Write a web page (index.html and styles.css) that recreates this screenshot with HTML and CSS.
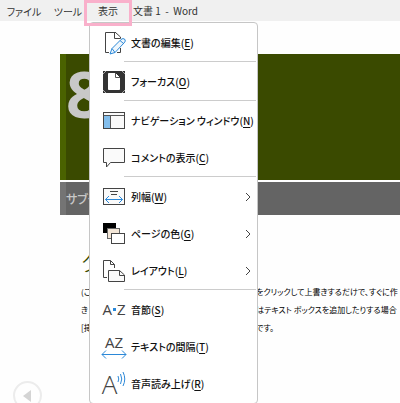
FILE: index.html
```html
<!DOCTYPE html>
<html lang="ja">

<head>
    <meta charset="UTF-8">
    <meta name="viewport" content="width=device-width, initial-scale=1.0">
    <title>文書 1 - Word</title>
    <link rel="stylesheet" href="styles.css">
</head>

<body>

    <header class="menu-bar">
        <button type="button" class="tab">ファイル</button>
        <button type="button" class="tab">ツール</button>
        <div class="view-tab">
            <button type="button" class="tab tab-active" aria-haspopup="true" aria-expanded="true">表示</button>

            <div class="menu" role="menu">
                <button type="button" class="item" role="menuitem">
                    <svg width="26" height="26" viewBox="0 0 26 26" fill="none">
                        <path d="M15 2.500H4.500V22.500H8M19.500 18V22.500H16M13.500 2.500V8.500H19.500V7L14.500 2.500Z" stroke="#444"/>
                        <path d="M9 24L11 18.500L20 9.500Q22 7.500 24 9.500Q25 11 23 13L14 22.500Z" fill="#eef6fc" stroke="#2b88d8"/>
                        <path d="M11 18.500L14 22.500M19 10.500L22.500 13.500" stroke="#2b88d8"/>
                    </svg>
                    <span>文書の編集(<u>E</u>)</span>
                </button>
                <hr>
                <button type="button" class="item" role="menuitem">
                    <svg width="26" height="26" viewBox="0 0 26 26" fill="none">
                        <rect x="2" y="2" width="22" height="22" fill="#333"/>
                        <path d="M7.500 4.500H14.500L18.500 8.500V20.500H7.500Z" fill="#fff" stroke="#fff"/>
                        <path d="M14.500 4V8.500H19" stroke="#555"/>
                        <path d="M2 5L5 2M21 2L24 5M2 21L5 24M21 24L24 21" stroke="#aaa"/>
                    </svg>
                    <span>フォーカス(<u>O</u>)</span>
                </button>
                <hr>
                <button type="button" class="item" role="menuitem">
                    <svg width="26" height="26" viewBox="0 0 26 26" fill="none">
                        <rect x="2.500" y="4.500" width="21" height="16" fill="#fafafa" stroke="#444"/>
                        <rect x="3" y="8" width="6" height="12" fill="#83beec"/>
                        <path d="M3 7.500H23M9.500 8V20" stroke="#555"/>
                    </svg>
                    <span>ナビゲーション ウィンドウ(<u>N</u>)</span>
                </button>
                <button type="button" class="item" role="menuitem">
                    <svg width="26" height="26" viewBox="0 0 26 26" fill="none">
                        <path d="M2.500 3.500H23.500V17.500H9.500L5.500 22V17.500H2.500Z" fill="#fafafa" stroke="#444"/>
                    </svg>
                    <span>コメントの表示(<u>C</u>)</span>
                </button>
                <hr>
                <button type="button" class="item" role="menuitem" aria-haspopup="true">
                    <svg width="26" height="26" viewBox="0 0 26 26" fill="none">
                        <rect x="2.500" y="4.500" width="21" height="16" fill="#fafafa" stroke="#444"/>
                        <path d="M9 7.500H17M10 10.500H16" stroke="#444"/>
                        <path d="M4.500 15.500H21.500M8 12L4.500 15.500L8 19M18 12L21.500 15.500L18 19" stroke="#2b88d8"/>
                    </svg>
                    <span>列幅(<u>W</u>)</span>
                    <svg class="arrow" width="6" height="10" viewBox="0 0 6 10" fill="none"><path d="M1 1L5 5L1 9" stroke="#444"/></svg>
                </button>
                <button type="button" class="item" role="menuitem" aria-haspopup="true">
                    <svg width="26" height="26" viewBox="0 0 26 26" fill="none">
                        <rect x="2" y="2" width="13" height="10" fill="#000"/>
                        <rect x="6.500" y="7.500" width="12" height="10" fill="#f3e6d7" stroke="#666"/>
                        <rect x="10.500" y="12.500" width="13" height="10" fill="#fff" stroke="#444"/>
                    </svg>
                    <span>ページの色(<u>G</u>)</span>
                    <svg class="arrow" width="6" height="10" viewBox="0 0 6 10" fill="none"><path d="M1 1L5 5L1 9" stroke="#444"/></svg>
                </button>
                <button type="button" class="item" role="menuitem" aria-haspopup="true">
                    <svg width="26" height="26" viewBox="0 0 26 26" fill="none">
                        <path d="M6 19.500H2.500V2.500H9.500L13.500 6.500V10M9.500 2.500V6.500H13.500" stroke="#444"/>
                        <path d="M7.500 12.500H18.500L23.500 17V23.500H7.500Z" fill="#fafafa" stroke="#444"/>
                        <path d="M18.500 12.500V17.500H23.500" stroke="#444"/>
                    </svg>
                    <span>レイアウト(<u>L</u>)</span>
                    <svg class="arrow" width="6" height="10" viewBox="0 0 6 10" fill="none"><path d="M1 1L5 5L1 9" stroke="#444"/></svg>
                </button>
                <hr>
                <button type="button" class="item" role="menuitem">
                    <span class="az-icon az-dot">A<i></i>Z</span>
                    <span>音節(<u>S</u>)</span>
                </button>
                <button type="button" class="item" role="menuitem">
                    <span class="az-icon az-wide">
                        <span>AZ</span>
                        <svg width="26" height="9" viewBox="0 0 26 9" fill="none"><path d="M1 4.500H25M5 0.500L1 4.500L5 8.500M21 0.500L25 4.500L21 8.500" stroke="#2b88d8"/></svg>
                    </span>
                    <span>テキストの間隔(<u>T</u>)</span>
                </button>
                <button type="button" class="item" role="menuitem">
                    <span class="az-icon az-read">
                        <span>A</span>
                        <svg width="9" height="16" viewBox="0 0 9 16" fill="none"><path d="M1 5Q2.500 8 1 11M3.500 3Q6 8 3.500 13M6 1Q9.500 8 6 15" stroke="#2b88d8"/></svg>
                    </span>
                    <span>音声読み上げ(<u>R</u>)</span>
                </button>
            </div>
        </div>
        <span class="doc-name">文書 1&nbsp; -&nbsp; Word</span>
    </header>

    <main class="page">
        <div class="cover">8</div>
        <div class="subtitle">サブタ</div>
        <h1>タ</h1>
        <div class="text">
            <span>(こ</span>
            <span>をクリックして上書きするだけで、すぐに作</span>
            <span>き</span>
            <span>はテキスト ボックスを追加したりする場合</span>
            <span>[挿</span>
            <span>です。</span>
        </div>
    </main>

    <button type="button" class="prev" aria-label="前のページ">
        <svg width="8" height="12" viewBox="0 0 8 12"><path d="M8 0V12L0 6Z" fill="#d4d4d4"/></svg>
    </button>

</body>

</html>
```

FILE: styles.css
```css
body {
    margin: 0;
    height: 100vh;
    overflow: hidden;
    background-color: #fefefe;
    color: #222;
    font-family: "Noto Sans CJK JP", sans-serif;
    font-size: 10px;
    font-kerning: normal;
    font-feature-settings: "palt", "kern";
}

button {
    margin: 0;
    padding: 0;
    border: none;
    background: none;
    color: inherit;
    font: inherit;
    font-kerning: inherit;
    font-feature-settings: inherit;
}

/* menu bar */
.menu-bar {
    display: flex;
    height: 21px;
    padding-left: 2px;
    background-color: #f0f0f0;
    color: #333;
    line-height: 21px;
    white-space: nowrap;
}

.tab {
    width: 44px;
    height: 22px;
    text-align: center;
}

.view-tab {
    position: relative;
    margin-left: -6px;
}

.tab-active {
    position: relative;
    z-index: 2;
    box-sizing: border-box;
    width: 48px;
    height: 26px;
    padding-bottom: 4px;
    border: 3px solid #f9b0cb;
    line-height: 16px;
}

.doc-name {
    padding-left: 1px;
}

/* drop-down menu */
.menu {
    position: absolute;
    top: 22px;
    left: 5px;
    z-index: 1;
    box-sizing: border-box;
    width: 169px;
    padding: 1px 0;
    border: 1px solid #c6c6c6;
    border-radius: 4px;
    background-color: #fff;
    color: #111;
}

.item {
    display: flex;
    align-items: center;
    gap: 4px;
    width: 100%;
    height: 37px;
    padding: 0 6px 0 11px;
    font-weight: 500;
    text-align: left;
    white-space: nowrap;
}

.item:hover {
    background-color: #eee;
}

.item svg {
    flex-shrink: 0;
}

.item u {
    text-underline-offset: 2px;
}

.item .arrow {
    margin-left: auto;
}

.menu hr {
    height: 1px;
    margin: 0 1px 1px 34px;
    border: none;
    background-color: #ccc;
}

.az-icon {
    display: flex;
    align-items: center;
    justify-content: center;
    width: 26px;
    color: #444;
    font-family: "Open Sans", sans-serif;
    font-size: 15px;
    font-weight: 400;
    line-height: 15px;
}

.az-dot i {
    width: 3px;
    height: 3px;
    margin: 0 1px;
    background-color: #2b88d8;
}

.az-wide {
    flex-direction: column;
}

.az-read span {
    font-size: 26px;
    font-weight: 300;
    line-height: 26px;
}

.az-read svg {
    align-self: flex-start;
}

/* document */
.page {
    margin: 33px 0 0 60px;
    white-space: nowrap;
}

.cover,
.subtitle {
    border-left: 6px solid #4a6200;
    background-color: #3a4a00;
    color: #c8c8c8;
}

.cover {
    height: 126px;
    font-family: "Open Sans", sans-serif;
    font-size: 64px;
    font-weight: bold;
    line-height: 80px;
}

.subtitle {
    height: 33px;
    margin-top: 2px;
    border-color: #747474;
    background-color: #646464;
    font-size: 12px;
    font-weight: 500;
    line-height: 34px;
}

h1 {
    margin: 28px 0 0 21px;
    color: #3a4a00;
    font-size: 24px;
    font-weight: 300;
    line-height: 36px;
}

.text {
    display: grid;
    grid-template-columns: 175px 1fr;
    margin: 4px 0 0 21px;
    color: #000;
    font-size: 8px;
    line-height: 18px;
}

.prev {
    display: flex;
    align-items: center;
    justify-content: center;
    box-sizing: border-box;
    width: 29px;
    height: 29px;
    margin: 44px 0 0 13px;
    padding-right: 2px;
    border: 2px solid #ececec;
    border-radius: 50%;
}
```
